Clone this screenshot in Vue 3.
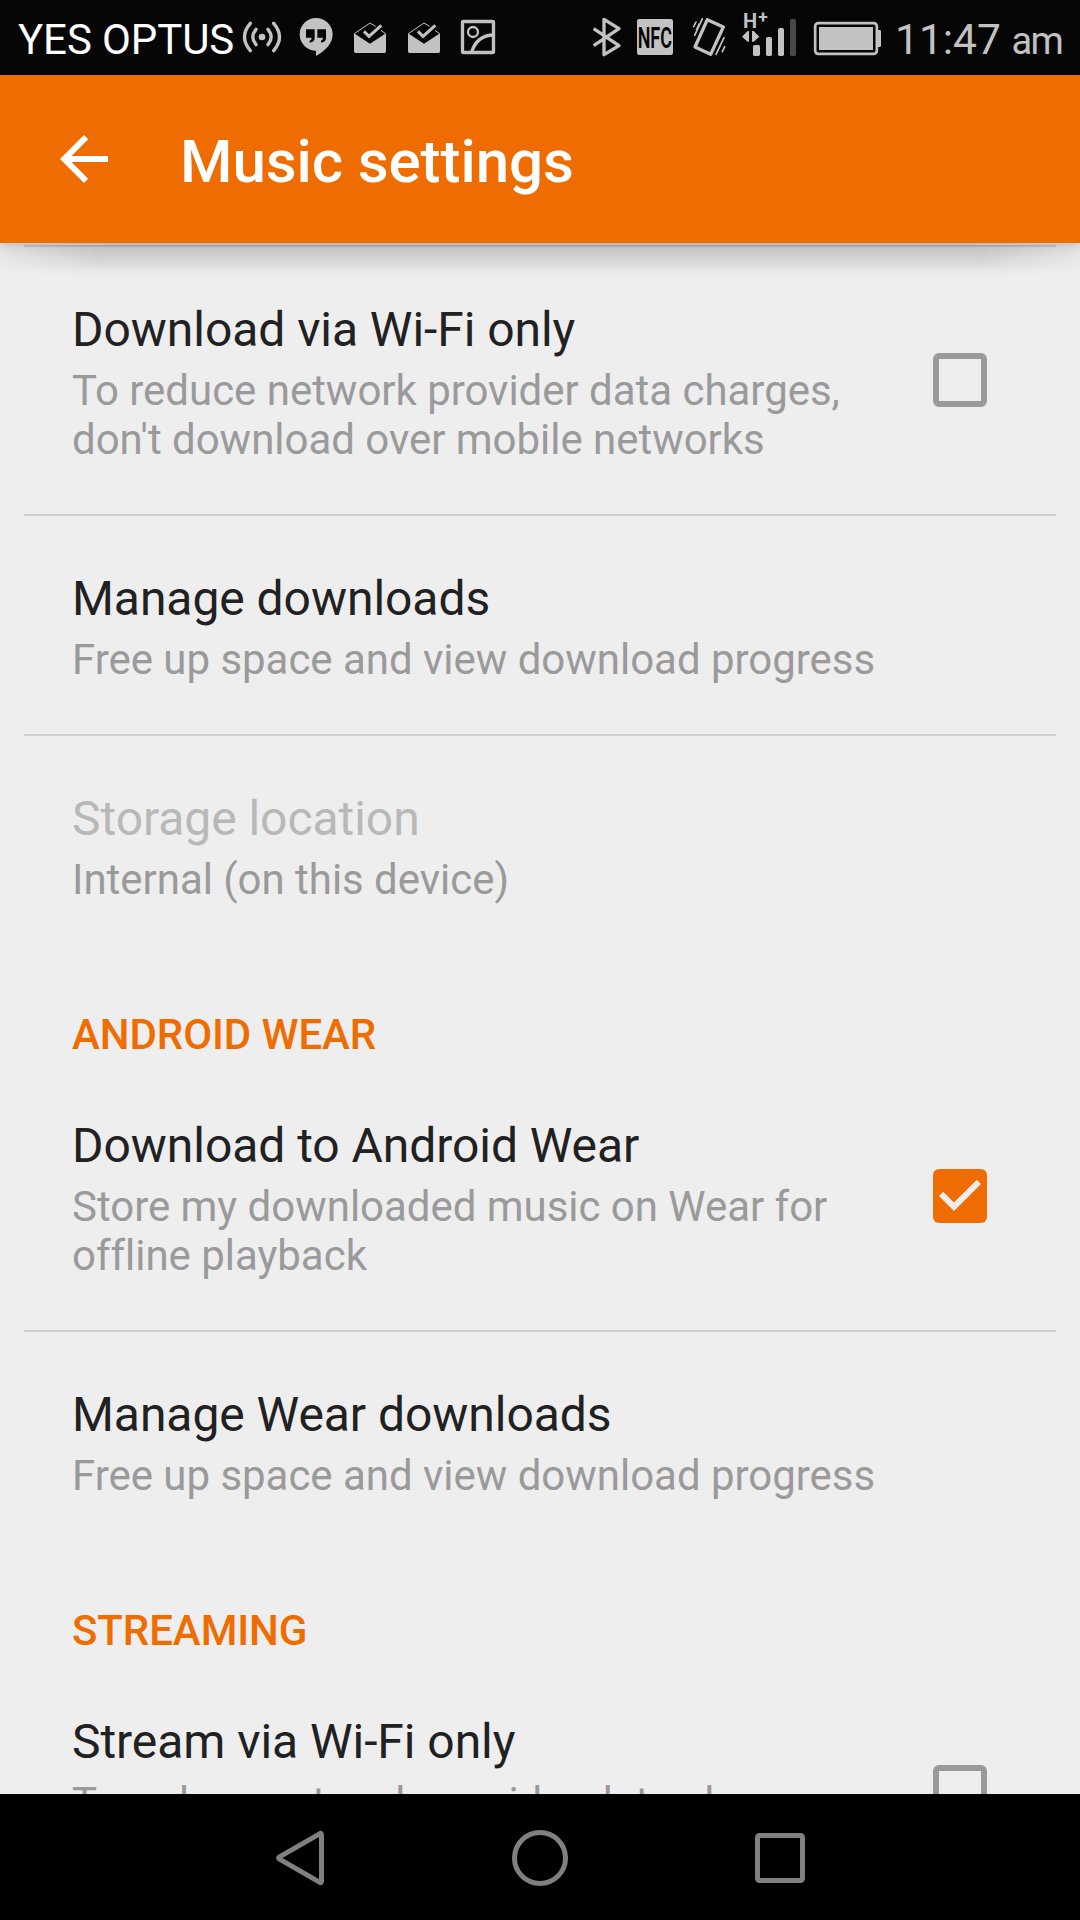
<template>
  <div class="screen">
    <header class="status">
      <span class="status__carrier">YES OPTUS</span>
      <!-- status glyphs share one 3x vertical grid, 225 units tall -->
      <svg class="status__icon" width="50" height="75" viewBox="36 0 150 225" fill="none">
        <circle cx="96" cy="111" r="10" fill="#c2c2c2" />
        <path d="M78 88Q59 111 78 134M114 88Q133 111 114 134M61 70Q26 111 61 152M131 70Q166 111 131 152" stroke="#c2c2c2" stroke-width="10" stroke-linecap="round" />
      </svg>
      <svg class="status__icon" width="50" height="75" viewBox="186 0 150 225">
        <path fill="#c2c2c2" fill-rule="evenodd" d="M258 54a49 49 0 0 0 0 98v16c26-14 50-36 50-65a49 49 0 0 0-50-49zM228 88h26v26q0 12-15 14v-6q6-2 6-9h-17zM262 88h26v26q0 12-15 14v-6q6-2 6-9h-17z" />
      </svg>
      <svg v-for="n in 2" :key="n" class="status__icon" width="54" height="75" viewBox="336 0 162 225" fill="none">
        <path fill="#c2c2c2" d="M372 100l48 31 48-31v54q0 5-5 5h-86q-5 0-5-5z" />
        <path d="M373 101l47-32 17 10M453 91l14 10" stroke="#c2c2c2" stroke-width="3" />
        <path d="M402 94l15 15 37-33" stroke="#c2c2c2" stroke-width="9" />
      </svg>
      <svg class="status__icon" width="54" height="75" viewBox="660 0 162 225" fill="none" stroke="#c2c2c2">
        <rect x="697.5" y="64.5" width="93" height="93" rx="3" stroke-width="10" />
        <circle cx="729" cy="96" r="15" stroke-width="7" />
        <path d="M725 156Q741 106 791 105" stroke-width="10" />
      </svg>

      <span class="status__gap" />

      <svg class="status__icon" width="40" height="75" viewBox="51 0 120 225" fill="none">
        <path d="M71 86l76 51-45 27V58l45 28-76 51" stroke="#c2c2c2" stroke-width="10" stroke-linejoin="round" />
      </svg>
      <svg class="status__icon" width="55" height="75" viewBox="171 0 165 225">
        <rect x="201" y="57" width="108" height="108" rx="7" fill="#c2c2c2" />
        <text x="203" y="143" class="status__nfc" textLength="103" lengthAdjust="spacingAndGlyphs">NFC</text>
      </svg>
      <svg class="status__icon" width="55" height="75" viewBox="336 0 165 225" fill="none" stroke="#c2c2c2">
        <path d="M412 59l48 22-38 82-47-22z" stroke-width="10" stroke-linejoin="round" />
        <path d="M378 66l-7 14M397 56l-23 50M464 140l-7 15M462 113l-24 50" stroke-width="5" stroke-linecap="round" />
        <path d="M387 70l-9 20M451 136l-8 18" stroke-width="3" />
      </svg>
      <svg class="status__icon" width="70" height="75" viewBox="501 0 210 225" fill="#c2c2c2">
        <text x="519" y="83" class="status__net">H</text>
        <text x="565" y="69" class="status__plus">+</text>
        <path d="M537 93v32h-4l-17-15 17-17zM546 93v32h5l17-15-17-17z" />
        <rect x="549" y="135" width="21" height="33" rx="5" />
        <rect x="588" y="111" width="18" height="57" rx="5" />
        <rect x="624" y="84" width="18" height="84" rx="5" />
        <rect x="660" y="57" width="18" height="111" rx="5" fill="#484848" />
      </svg>
      <svg class="status__icon" width="80" height="75" viewBox="21 0 240 225">
        <rect x="45.5" y="69.5" width="185" height="92" rx="9" fill="none" stroke="#c2c2c2" stroke-width="8" />
        <rect x="57" y="81" width="162" height="69" fill="#c2c2c2" />
        <path d="M233 90h6q4 0 4 4v43q0 4-4 4h-6z" fill="#c2c2c2" />
      </svg>
      <span class="status__time">11:47 <span class="status__ampm">am</span></span>
    </header>

    <nav class="appbar">
      <svg class="appbar__back" width="72" height="72" viewBox="0 0 24 24" fill="#fff">
        <path d="M20 11H7.83l5.59-5.59L12 4l-8 8 8 8 1.41-1.41L7.83 13H20v-2z" />
      </svg>
      <h1 class="appbar__title">Music settings</h1>
    </nav>

    <main class="settings">
      <section v-for="(group, i) in groups" :key="i" class="group">
        <h2 v-if="group.header" class="group__header">{{ group.header }}</h2>
        <div
          v-for="item in group.items"
          :key="item.title"
          class="row"
          :class="{ 'row--disabled': item.disabled }"
        >
          <div class="row__text">
            <div class="row__title">{{ item.title }}</div>
            <div v-for="line in item.summary" :key="line" class="row__summary">{{ line }}</div>
          </div>
          <span v-if="'checked' in item" class="check" :class="{ 'check--on': item.checked }">
            <svg v-if="item.checked" width="54" height="54" viewBox="0 0 18 18">
              <path d="M7 14L2 9l1.41-1.41L7 11.17l7.59-7.59L16 5z" fill="#eee" />
            </svg>
          </span>
        </div>
      </section>
    </main>

    <footer class="navbar">
      <svg width="1080" height="126" viewBox="0 0 1080 126" fill="none" stroke="#808080" stroke-width="5" stroke-linejoin="round">
        <path d="M321.5 41v46q0 2.5-2 1.2l-40-23q-1.8-1.2 0-2.4l40-23q2-1.3 2 1.2z" />
        <circle cx="540" cy="64" r="25.5" />
        <rect x="757.5" y="41.5" width="45" height="45" rx="2" />
      </svg>
    </footer>
  </div>
</template>

<script setup>
const groups = [
  {
    items: [
      {
        title: 'Download via Wi-Fi only',
        summary: ['To reduce network provider data charges,', "don't download over mobile networks"],
        checked: false,
      },
      { title: 'Manage downloads', summary: ['Free up space and view download progress'] },
      { title: 'Storage location', summary: ['Internal (on this device)'], disabled: true },
    ],
  },
  {
    header: 'ANDROID WEAR',
    items: [
      {
        title: 'Download to Android Wear',
        summary: ['Store my downloaded music on Wear for', 'offline playback'],
        checked: true,
      },
      { title: 'Manage Wear downloads', summary: ['Free up space and view download progress'] },
    ],
  },
  {
    header: 'STREAMING',
    items: [
      {
        title: 'Stream via Wi-Fi only',
        summary: ['To reduce network provider data charges,'],
        checked: false,
      },
    ],
  },
]
</script>

<style>
body {
  margin: 0;
  background: #000;
}
</style>

<style scoped>
.screen {
  display: flex;
  flex-direction: column;
  width: 1080px;
  height: 1920px;
  overflow: hidden;
  background: #eee;
  font-family: Roboto, sans-serif;
  font-variant-ligatures: none;
}

.status {
  display: flex;
  flex: none;
  box-sizing: border-box;
  height: 75px;
  padding-left: 18px;
  background: #060606;
  color: #c2c2c2;
  font-size: 42px;
  line-height: 49px;
  white-space: nowrap;
}

.status__carrier {
  width: 224px;
  padding-top: 15px;
  color: #fff;
  letter-spacing: -0.1px;
}

.status__icon {
  display: block;
  flex: none;
}

.status__gap {
  flex: 1;
}

.status__nfc {
  fill: #060606;
  font-size: 88px;
  font-weight: 600;
}

.status__net {
  font-size: 60px;
  font-weight: 700;
}

.status__plus {
  font-size: 52px;
  font-weight: 700;
}

.status__time {
  box-sizing: border-box;
  width: 193px;
  padding: 15px 0 0 8px;
  font-size: 42.5px;
}

.status__ampm {
  font-size: 38px;
  letter-spacing: -1.5px;
}

.appbar {
  position: relative;
  z-index: 1;
  display: flex;
  flex: none;
  align-items: center;
  box-sizing: border-box;
  height: 168px;
  padding-left: 48px;
  background: #ef6c00;
  box-shadow: 0 3px 10px rgba(0, 0, 0, 0.18);
}

/* soft drop shadow that fades towards both screen edges */
.appbar::after {
  content: '';
  position: absolute;
  top: 100%;
  left: 0;
  right: 0;
  height: 33px;
  background: linear-gradient(rgba(0, 0, 0, 0.09), rgba(0, 0, 0, 0.14) 30%, rgba(0, 0, 0, 0.09) 60%, rgba(0, 0, 0, 0.02) 85%, transparent);
  mask-image: linear-gradient(to right, rgba(0, 0, 0, 0.2), #000 100px, #000 980px, rgba(0, 0, 0, 0.2));
  pointer-events: none;
}

.appbar__title {
  margin: 6px 0 0 60px;
  color: #fff;
  font-size: 60px;
  font-weight: 500;
  line-height: 70px;
  letter-spacing: -0.08px;
}

.settings {
  flex: 1;
  min-height: 0;
  padding-top: 2px;
  overflow: hidden;
}

.group__header {
  margin: 0;
  padding: 56px 72px 4px;
  color: #ef6c00;
  font-size: 42px;
  font-weight: 500;
  line-height: 49px;
  letter-spacing: -0.08px;
}

.row {
  display: flex;
  justify-content: space-between;
  margin: 0 24px;
  padding: 55px 69px 50px 48px;
}

.row + .row,
.group:first-child .row:first-child {
  border-top: 2px solid #d0d0d0;
}

.row__title {
  margin-bottom: 8px;
  color: #212121;
  font-size: 48px;
  line-height: 56px;
  letter-spacing: -0.05px;
}

.row__summary {
  color: #9a9a9a;
  font-size: 42px;
  line-height: 49px;
  letter-spacing: -0.03px;
  white-space: nowrap;
}

.row--disabled .row__title {
  color: #b8b8b8;
}

.check {
  box-sizing: border-box;
  flex: none;
  width: 54px;
  height: 54px;
  margin-top: 51px;
  border: 6px solid #9a9a9a;
  border-radius: 6px;
}

.check--on {
  border: 0;
  background: #ef6c00;
}

.check svg {
  display: block;
}

.navbar {
  flex: none;
  height: 126px;
  background: #000;
}

.navbar svg {
  display: block;
}
</style>
